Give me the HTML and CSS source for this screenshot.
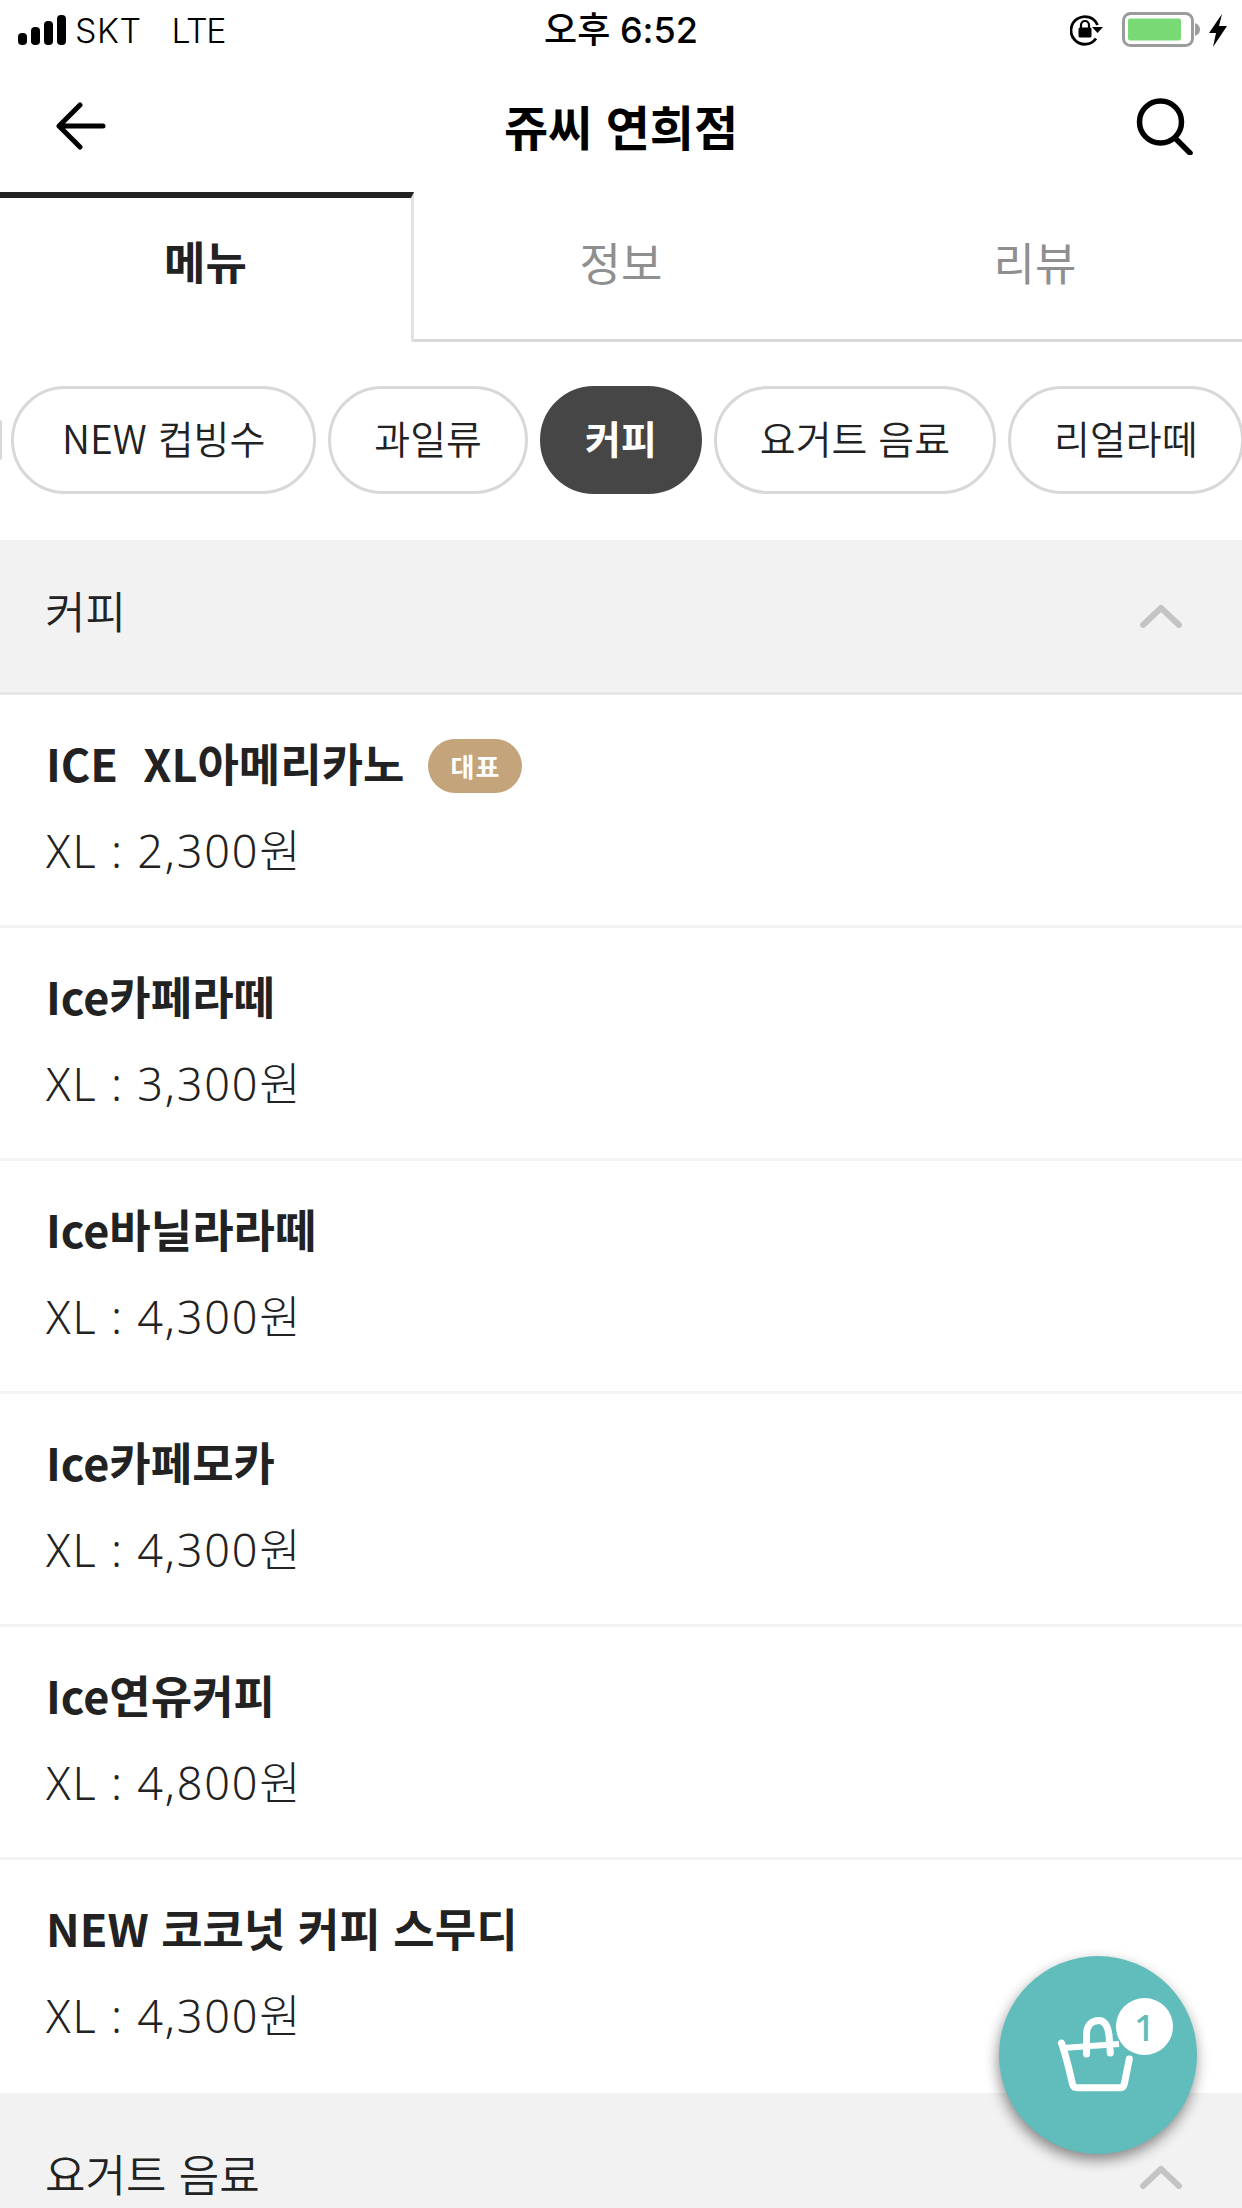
FILE: index.html
```html
<!DOCTYPE html>
<html lang="ko">
<head>
<meta charset="utf-8">
<title>쥬씨 연희점</title>
<link rel="stylesheet" href="styles.css">
</head>
<body>
<div class="screen">
  <div class="status">
    <div class="status-left">
      <svg class="signal" width="48" height="30" viewBox="0 0 48 30"><rect x="0" y="18" width="9" height="12" rx="4"/><rect x="13" y="12" width="9" height="18" rx="4"/><rect x="26" y="6" width="9" height="24" rx="4"/><rect x="39" y="0" width="9" height="30" rx="4"/></svg>
      <span class="carrier">SKT</span><span class="net">LTE</span>
    </div>
    <div class="status-time">오후 6:52</div>
    <div class="status-right">
      <svg class="lock" width="33" height="32" viewBox="0 0 33 32"><path d="M26 24.500A13.800 13.800 0 1 1 27.500 11" fill="none" stroke="#000" stroke-width="2.800"/><path d="M22 13h11l-5.500 6z"/><rect x="8.500" y="13.500" width="13" height="10" rx="1.500"/><path d="M11 14v-3a4 4 0 0 1 8 0v3" fill="none" stroke="#000" stroke-width="2.200"/></svg>
      <svg class="battery" width="78" height="36" viewBox="0 0 78 36"><rect x="1.500" y="1.500" width="69" height="32" rx="7" fill="none" stroke="#9b9b9b" stroke-width="3"/><rect x="6" y="6.500" width="53" height="22" rx="2" fill="#78d975"/><path d="M73 11q5 2 5 6.500t-5 6.500z" fill="#9b9b9b"/></svg>
      <svg class="bolt" width="18" height="33" viewBox="0 0 18 33"><path d="M13 0L0 19h7L4 33l14-21h-8z"/></svg>
    </div>
  </div>

  <header class="nav">
    <svg class="back" width="50" height="48" viewBox="0 0 50 48"><path d="M24 3L3 24l21 21M4 24h43" fill="none" stroke="#000" stroke-width="5" stroke-linecap="round" stroke-linejoin="round"/></svg>
    <h1 class="title">쥬씨 연희점</h1>
    <svg class="search" width="58" height="58" viewBox="0 0 58 58"><circle cx="24.500" cy="25" r="21" fill="none" stroke="#000" stroke-width="5.500"/><path d="M39 41l15 15" fill="none" stroke="#000" stroke-width="5.500" stroke-linecap="round"/></svg>
  </header>

  <nav class="tabs">
    <div class="tab tab-active">메뉴</div>
    <div class="tab">정보</div>
    <div class="tab">리뷰</div>
  </nav>

  <div class="chips">
    <div class="chip chip-hidden"></div>
    <div class="chip chip-new">NEW 컵빙수</div>
    <div class="chip">과일류</div>
    <div class="chip chip-on">커피</div>
    <div class="chip">요거트 음료</div>
    <div class="chip">리얼라떼</div>
  </div>

  <section class="group">
    <div class="group-head"><span>커피</span>
      <svg class="chev" width="42" height="24" viewBox="0 0 42 24"><path d="M3 21L21 4l18 17" fill="none" stroke="#c4c4c4" stroke-width="6" stroke-linecap="round" stroke-linejoin="round"/></svg>
    </div>
    <div class="item"><div class="name"><span class="ice">ICE&nbsp; XL아메리카노</span><span class="badge">대표</span></div><div class="price">XL : 2,300원</div></div>
    <div class="item"><div class="name">Ice카페라떼</div><div class="price">XL : 3,300원</div></div>
    <div class="item"><div class="name">Ice바닐라라떼</div><div class="price">XL : 4,300원</div></div>
    <div class="item"><div class="name">Ice카페모카</div><div class="price">XL : 4,300원</div></div>
    <div class="item"><div class="name">Ice연유커피</div><div class="price">XL : 4,800원</div></div>
    <div class="item item-last"><div class="name">NEW 코코넛 커피 스무디</div><div class="price">XL : 4,300원</div></div>
  </section>

  <section class="group">
    <div class="group-head group-head-cut"><span>요거트 음료</span>
      <svg class="chev" width="42" height="24" viewBox="0 0 42 24"><path d="M3 21L21 4l18 17" fill="none" stroke="#c4c4c4" stroke-width="6" stroke-linecap="round" stroke-linejoin="round"/></svg>
    </div>
  </section>

  <button class="cart" type="button" aria-label="장바구니">
    <svg width="80" height="80" viewBox="0 0 80 80"><path d="M8 32L64 28" fill="none" stroke="#fff" stroke-width="6"/><path d="M6.500 27c5 14 8 28 11 41q.8 3.800 5 3.800h42q3.800 0 4.800-3.800l5-25" fill="none" stroke="#fff" stroke-width="7" stroke-linecap="round" stroke-linejoin="round"/><path d="M31.500 38V19C31.500 9 37 4.500 44 4.500 51 4.500 53 12 54 19l1.300 18" fill="none" stroke="#fff" stroke-width="7" stroke-linecap="round"/></svg>
    <span class="cart-count">1</span>
  </button>
</div>
</body>
</html>
```
FILE: styles.css
```css
* { box-sizing: border-box; margin: 0; padding: 0; }
html, body { background: #fff; }
body { font-family: "Noto Sans CJK KR", "Noto Sans", sans-serif; color: #222; }
.screen { position: relative; width: 1242px; height: 2208px; overflow: hidden; background: #fff; }

.status { height: 60px; display: flex; align-items: center; justify-content: space-between; position: relative; padding: 0 15px 0 18px; color: #000; }
.status-left { display: flex; align-items: center; font-family: "Inter", "Noto Sans", sans-serif; font-size: 34px; font-weight: 300; }
.signal { margin-right: 9px; }
.carrier { margin-right: 30px; letter-spacing: .5px; }
.net { letter-spacing: -1.5px; }
.status-time { position: absolute; left: 0; right: 0; text-align: center; font-family: "Inter", "Noto Sans CJK KR", sans-serif; font-size: 36px; font-weight: 500; line-height: 60px; pointer-events: none; }
.status-right { display: flex; align-items: center; }
.lock { margin-right: 19px; }
.battery { margin-right: 9px; }

.nav { height: 132px; display: flex; align-items: center; justify-content: space-between; padding: 0 48px 0 56px; }
.title { font-size: 48px; font-weight: 700; color: #000; position: absolute; left: 0; right: 0; text-align: center; pointer-events: none; margin-top: -2px; }

.tabs { display: flex; height: 150px; }
.tab { width: 414px; display: flex; align-items: center; justify-content: center; font-size: 45px; color: #8f8f8f; border-bottom: 3px solid #d8d8d8; padding-bottom: 8px; }
.tab-active { font-weight: 700; color: #222; border-top: 6px solid #222; border-right: 3px solid #e2e2e2; border-bottom: 0; padding-bottom: 20px; }

.chips { display: flex; gap: 12px; margin-top: 44px; margin-bottom: 46px; height: 108px; overflow: hidden; width: 1242px; }
.chip { flex: none; height: 108px; display: flex; align-items: center; border: 3px solid #d8d8d8; border-radius: 54px; padding: 0 43px 6px; font-size: 39px; color: #222; background: #fff; font-weight: 350; }
.chip-new { padding-left: 48px; padding-right: 48px; }
.chip-hidden { width: 3px; padding: 0; margin-left: -1px; margin-right: -3px; border-radius: 0 54px 54px 0; border-left: 0; height: 40px; align-self: center; }
.chip-on { background: #464646; border-color: #464646; color: #fff; font-weight: 700; padding-left: 42px; padding-right: 42px; }

.group-head { height: 155px; background: #f2f2f2; border-bottom: 3px solid #e6e6e6; display: flex; align-items: center; justify-content: space-between; padding: 0 60px 12px 45px; font-size: 44px; font-weight: 350; color: #222; }
.chev { margin-top: 11px; }
.group-head-cut { border-bottom: 0; padding-top: 5px; padding-bottom: 0; }
.group-head-cut .chev { margin-top: 7px; }

.item { height: 233px; padding-top: 36px; border-bottom: 3px solid #f3f3f3; }
.item-last { border-bottom: 0; }
.name { display: flex; align-items: center; height: 62px; font-size: 45px; font-weight: 700; color: #222; padding-left: 46px; }
.badge { width: 94px; height: 54px; margin-left: 24px; margin-top: 7px; border-radius: 27px; background: #c3a47b; color: #fff; display: flex; align-items: center; justify-content: center; font-size: 26px; font-weight: 700; letter-spacing: 1px; }
.price { margin-top: 27px; height: 62px; line-height: 62px; font-size: 45px; font-weight: 300; color: #222; padding-left: 46px; letter-spacing: 1.8px; font-family: "Noto Sans", "Noto Sans CJK KR", sans-serif; }

.cart { position: absolute; left: 999px; top: 1956px; width: 198px; height: 198px; border: 0; border-radius: 50%; background: #60bdbc; box-shadow: -1px 6px 14px rgba(0,0,0,.45); }
.cart svg { position: absolute; left: 56px; top: 60px; }
.cart-count { position: absolute; left: 117px; top: 42px; width: 57px; height: 57px; border-radius: 50%; background: #fff; color: #60bdbc; font-size: 37px; font-weight: 500; display: flex; align-items: center; justify-content: center; font-family: "Noto Sans", sans-serif; }
```
